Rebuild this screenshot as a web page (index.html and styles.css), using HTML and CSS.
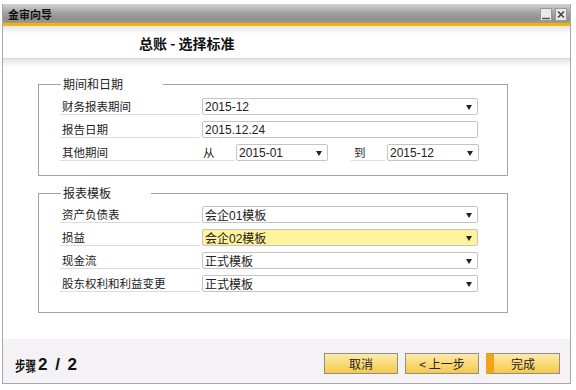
FILE: index.html
```html
<!DOCTYPE html>
<html lang="zh-CN">
<head>
    <meta charset="UTF-8">
    <meta name="viewport" content="width=device-width, initial-scale=1.0">
    <title>金审向导</title>
    <link rel="stylesheet" href="styles.css">
</head>
<body>
    <div class="window">
        <div class="titlebar">
            <span class="title">金审向导</span>
            <div class="win-buttons">
                <svg class="win-btn" width="12" height="13" viewBox="0 0 12 13">
                    <rect x="0.5" y="0.5" width="11" height="12" fill="#e9e9e9" stroke="#9a9a9a"/>
                    <line x1="2" y1="10.5" x2="10" y2="10.5" stroke="#555" stroke-width="1.5"/>
                </svg>
                <svg class="win-btn" width="12" height="13" viewBox="0 0 12 13">
                    <rect x="0.5" y="0.5" width="11" height="12" fill="#e9e9e9" stroke="#9a9a9a"/>
                    <path d="M3 3.5 L9 9.5 M9 3.5 L3 9.5" stroke="#444" stroke-width="1.6"/>
                </svg>
            </div>
        </div>

        <div class="header">
            <h1>总账 - 选择标准</h1>
        </div>
        <div class="separator"></div>

        <div class="content">
            <!-- --- 期间和日期 --- -->
            <fieldset class="group">
                <legend>期间和日期</legend>
                <div class="row">
                    <span class="label">财务报表期间</span>
                    <div class="field select wide"><span>2015-12</span><i class="arrow"></i></div>
                </div>
                <div class="row">
                    <span class="label">报告日期</span>
                    <div class="field wide"><span>2015.12.24</span></div>
                </div>
                <div class="row">
                    <span class="label">其他期间</span>
                    <span class="label small">从</span>
                    <div class="field select short"><span>2015-01</span><i class="arrow"></i></div>
                    <span class="spacer"></span>
                    <span class="label small">到</span>
                    <div class="field select short"><span>2015-12</span><i class="arrow"></i></div>
                </div>
            </fieldset>

            <!-- --- 报表模板 --- -->
            <fieldset class="group templates">
                <legend>报表模板</legend>
                <div class="row">
                    <span class="label">资产负债表</span>
                    <div class="field select wide"><span>会企01模板</span><i class="arrow"></i></div>
                </div>
                <div class="row">
                    <span class="label">损益</span>
                    <div class="field select wide active"><span>会企02模板</span><i class="arrow"></i></div>
                </div>
                <div class="row">
                    <span class="label">现金流</span>
                    <div class="field select wide"><span>正式模板</span><i class="arrow"></i></div>
                </div>
                <div class="row">
                    <span class="label">股东权利和利益变更</span>
                    <div class="field select wide"><span>正式模板</span><i class="arrow"></i></div>
                </div>
            </fieldset>
        </div>

        <div class="footer">
            <div class="step"><span class="step-cn">步骤</span>2 / 2</div>
            <div class="buttons">
                <button class="btn">取消</button>
                <button class="btn">&lt; 上一步</button>
                <button class="btn primary">完成</button>
            </div>
        </div>
    </div>
</body>
</html>
```

FILE: styles.css
```css
body {
    margin: 0;
    background-color: #fff;
    font-family: "Noto Sans CJK SC", "Liberation Sans", sans-serif;
    color: #222;
}

.window {
    width: 567px;
    margin: 4px 0 0 2px;
    border-left: 1px solid #a8a8a8;
    border-right: 1px solid #a8a8a8;
    border-bottom: 1px solid #a8a8a8;
}

/* --- Title bar --- */
.titlebar {
    height: 19px;
    display: flex;
    align-items: center;
    justify-content: space-between;
    padding: 0 3px 0 5px;
    background: linear-gradient(#d4d4d4, #a3a3a3 45%, #8f8f8f 80%, #9b9b9b);
    border-bottom: 3px solid #f5b400;
}

.title {
    font-size: 11px;
    font-weight: bold;
    color: #111;
}

.win-buttons {
    display: flex;
    gap: 3px;
    padding-top: 1px;
}

.win-btn {
    display: block;
}

/* --- Header --- */
.header {
    height: 32px;
    display: flex;
    align-items: center;
    padding-left: 136px;
    background: linear-gradient(#e6e6e6, #fff 8px);
}

.header h1 {
    margin: 0;
    font-size: 14px;
    font-weight: bold;
    color: #111;
    padding-top: 2px;
}

.separator {
    height: 8px;
    border-top: 1px solid #d4d4d4;
    background: linear-gradient(#e4e4e4, #f2f2f2 50%, #fff);
}

/* --- Group boxes --- */
.content {
    padding: 10px 0 26px 35px;
}

.group {
    width: 447px;
    margin: 0;
    padding: 7px 0 14px 21px;
    border: 1px solid #a3a3a3;
    min-inline-size: 0;
}

.group + .group {
    margin-top: 10px;
}

.templates {
    padding-top: 6px;
    padding-bottom: 20px;
}

.group legend {
    margin-left: 1px;
    padding: 0 40px 0 2px;
    font-size: 12px;
    line-height: 14px;
    background-color: #fff;
}

.row {
    display: flex;
    height: 17px;
    margin-bottom: 6px;
}

.row:last-child {
    margin-bottom: 0;
}

.label {
    width: 140px;
    box-sizing: border-box;
    padding-left: 2px;
    font-size: 11.5px;
    line-height: 16px;
    border-bottom: 1px solid #dcdcdc;
}

.label.small {
    width: 34px;
    padding-left: 3px;
}

.spacer {
    width: 23px;
}

/* --- Fields --- */
.field {
    margin-left: 2px;
    height: 17px;
    box-sizing: border-box;
    display: flex;
    align-items: center;
    padding: 0 5px 0 2px;
    border: 1px solid #c4c4c4;
    border-radius: 2px;
    background-color: #fff;
    font-family: "Liberation Sans", "Noto Sans CJK SC", sans-serif;
    font-size: 12px;
}

.field span {
    flex: 1;
}

.field.wide {
    width: 276px;
}

.field.short {
    width: 92px;
}

.field.active {
    background-color: #fff29c;
}

.arrow {
    width: 0;
    height: 0;
    border-left: 3.5px solid transparent;
    border-right: 3.5px solid transparent;
    border-top: 5px solid #222;
    margin-top: 1px;
}

/* --- Footer --- */
.footer {
    height: 44px;
    display: flex;
    align-items: flex-end;
    justify-content: space-between;
    padding: 0 10px 8px 9px;
    box-sizing: border-box;
    background-color: #f5f2f5;
}

.step {
    font-family: "Liberation Sans", sans-serif;
    font-size: 17px;
    font-weight: bold;
    color: #111;
    line-height: 18px;
    padding-left: 3px;
    word-spacing: 3px;
}

.step-cn {
    font-family: "Noto Sans CJK SC", sans-serif;
    font-size: 10.5px;
    margin-right: 2px;
    display: inline-block;
    transform: scaleY(1.35);
}

.buttons {
    display: flex;
    gap: 7px;
    margin-bottom: 1px;
}

.btn {
    width: 74px;
    height: 21px;
    padding: 0;
    border: 1px solid #8e8e8e;
    background: linear-gradient(#fdebad, #f9d873 55%, #f5c94a);
    font-family: "Noto Sans CJK SC", sans-serif;
    font-size: 12px;
    color: #222;
}

.btn.primary {
    border-left: 8px solid #f2a21b;
    padding-right: 7px;
}
```
